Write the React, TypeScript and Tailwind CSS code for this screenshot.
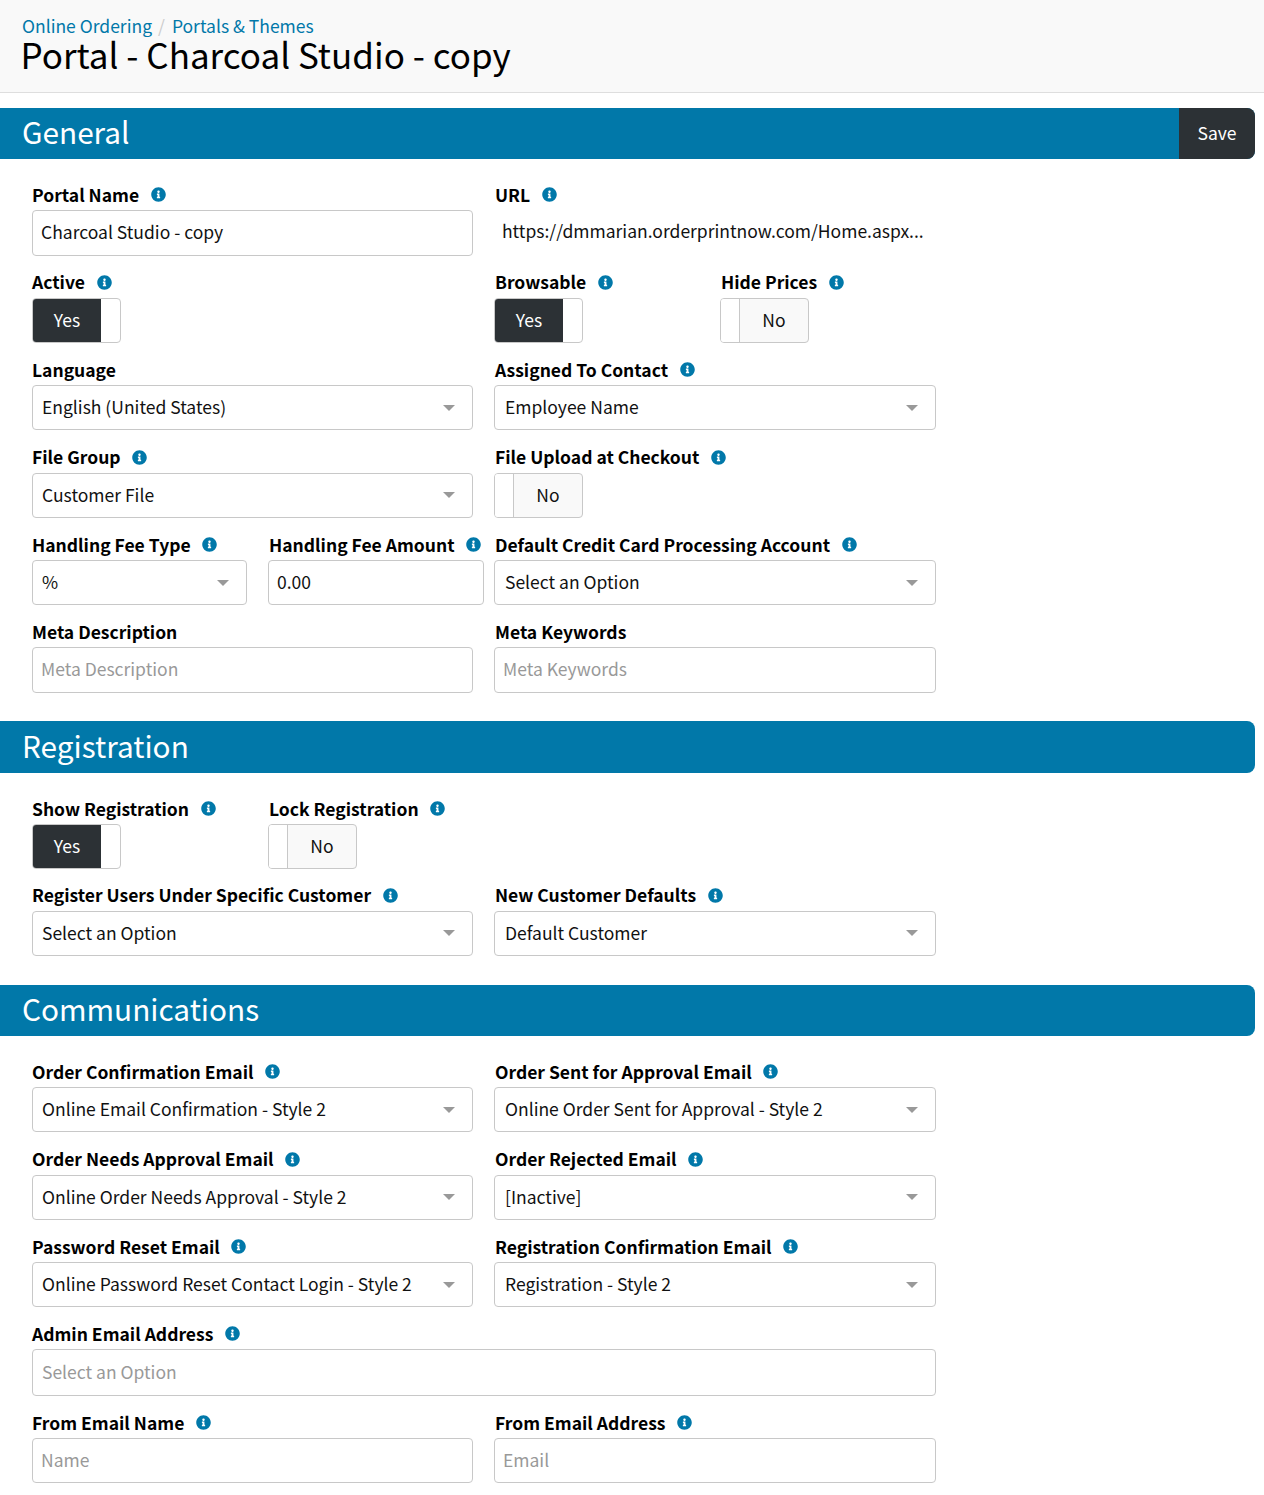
import { FaInfoCircle } from "react-icons/fa";

const FONT = "font-['Noto_Sans_CJK_SC','Noto_Sans',sans-serif]";

function Info() {
  return <FaInfoCircle className="ml-[11.5px] inline-block h-[15px] w-[15px] shrink-0 text-[#0178a9]" />;
}

function Label({ text, info = true, right }: { text: string; info?: boolean; right?: boolean }) {
  return (
    <div
      className={`flex h-[27px] items-center whitespace-nowrap pb-[4px] text-[17.5px] font-bold leading-[24px] text-black ${
        right ? "pl-px" : ""
      }`}
    >
      {text}
      {info ? <Info /> : null}
    </div>
  );
}

function TextInput({
  value,
  placeholder,
  height = "h-[46px]",
  indent = "pl-2"
}: {
  value?: string;
  placeholder?: string;
  height?: string;
  indent?: string;
}) {
  return (
    <div
      className={`flex items-center rounded-[4px] border border-[#c8c8c8] bg-white pb-[2px] pr-2 text-[17.5px] leading-[24px] ${height} ${indent} ${
        value ? "text-[#111]" : "text-[#999]"
      }`}
    >
      {value ?? placeholder}
    </div>
  );
}

function Select({ value, right }: { value: string; right?: boolean }) {
  return (
    <div
      className={`flex h-[45px] items-center justify-between rounded-[4px] border border-[#c8c8c8] bg-white pr-[17px] text-[17.5px] leading-[24px] text-[#111] ${
        right ? "pl-[10px]" : "pl-[9px]"
      }`}
    >
      <span className="pb-[1px]">{value}</span>
      <span className="h-0 w-0 border-x-[6px] border-t-[6px] border-x-transparent border-t-[#999]" />
    </div>
  );
}

function Toggle({ on }: { on: boolean }) {
  if (on) {
    return (
      <div className="flex h-[45px] w-[89px] overflow-hidden rounded-[4px] border border-[#c8c8c8] bg-white text-[17.5px] text-white">
        <div className="flex w-[68px] items-center justify-center bg-[#2c3135]">Yes</div>
      </div>
    );
  }
  return (
    <div className="flex h-[45px] w-[89px] overflow-hidden rounded-[4px] border border-[#c8c8c8] bg-[#f9f9f9] text-[17.5px] text-[#111]">
      <div className="w-[19px] border-r border-[#c8c8c8] bg-white" />
      <div className="flex flex-1 items-center justify-center">No</div>
    </div>
  );
}

function Bar({ title, save, className = "h-[51px]" }: { title: string; save?: boolean; className?: string }) {
  return (
    <div className={`mr-[9px] flex items-center justify-between overflow-hidden rounded-r-[8px] bg-[#0178a9] text-white ${className}`}>
      <h2 className="pb-[3px] pl-[22px] text-[29.75px] leading-none">{title}</h2>
      {save ? (
        <button className="flex h-full w-[76px] items-center justify-center bg-[#2c3135] text-[17.5px]">Save</button>
      ) : null}
    </div>
  );
}

function Row({ children, className = "h-[87.5px]" }: { children: React.ReactNode; className?: string }) {
  return <div className={`grid w-[904px] grid-cols-[441px_442px] gap-x-[21px] ${className}`}>{children}</div>;
}

function Half({ children, right }: { children: React.ReactNode; right?: boolean }) {
  return (
    <div className={`grid gap-x-[21px] ${right ? "grid-cols-[205px_216px]" : "grid-cols-[215px_216px]"}`}>{children}</div>
  );
}

export default function App() {
  return (
    <div className={`min-h-[1495px] bg-white ${FONT}`}>
      <header className="h-[93px] border-b border-[#dedede] bg-[#f9f9f9] pl-[22px] pt-[15px]">
        <nav className="flex h-[22px] items-center text-[17.5px] leading-[22px] text-[#0178a9]">
          <a>Online Ordering</a>
          <span className="ml-[6px] mr-[7px] text-[#ccc]">/</span>
          <a>Portals &amp; Themes</a>
        </nav>
        <h1 className="-ml-[1.5px] text-[35px] leading-[34px] text-black">Portal - Charcoal Studio - copy</h1>
      </header>

      <section className="mt-[15px]">
        <Bar title="General" save />
        <div className="pb-[13.5px] pl-[32px] pt-[24px]">
          <Row>
            <div>
              <Label text="Portal Name" />
              <TextInput value="Charcoal Studio - copy" />
            </div>
            <div>
              <Label text="URL" right />
              <div className="flex h-[42px] items-center pl-2 text-[17.5px] text-[#111]">
                https://dmmarian.orderprintnow.com/Home.aspx...
              </div>
            </div>
          </Row>
          <Row>
            <div>
              <Label text="Active" />
              <Toggle on />
            </div>
            <Half right>
              <div>
                <Label text="Browsable" right />
                <Toggle on />
              </div>
              <div>
                <Label text="Hide Prices" right />
                <Toggle on={false} />
              </div>
            </Half>
          </Row>
          <Row>
            <div>
              <Label text="Language" info={false} />
              <Select value="English (United States)" />
            </div>
            <div>
              <Label text="Assigned To Contact" right />
              <Select value="Employee Name" right />
            </div>
          </Row>
          <Row>
            <div>
              <Label text="File Group" />
              <Select value="Customer File" />
            </div>
            <div>
              <Label text="File Upload at Checkout" right />
              <Toggle on={false} />
            </div>
          </Row>
          <Row className="h-[87px]">
            <Half>
              <div>
                <Label text="Handling Fee Type" />
                <Select value="%" />
              </div>
              <div>
                <Label text="Handling Fee Amount" right />
                <TextInput value="0.00" height="h-[45px]" />
              </div>
            </Half>
            <div>
              <Label text="Default Credit Card Processing Account" right />
              <Select value="Select an Option" right />
            </div>
          </Row>
          <Row>
            <div>
              <Label text="Meta Description" info={false} />
              <TextInput placeholder="Meta Description" />
            </div>
            <div>
              <Label text="Meta Keywords" info={false} right />
              <TextInput placeholder="Meta Keywords" />
            </div>
          </Row>
        </div>
      </section>

      <section>
        <Bar title="Registration" className="h-[52px]" />
        <div className="pb-[15px] pl-[32px] pt-[24px]">
          <Row className="h-[86.5px]">
            <Half>
              <div>
                <Label text="Show Registration" />
                <Toggle on />
              </div>
              <div>
                <Label text="Lock Registration" right />
                <Toggle on={false} />
              </div>
            </Half>
          </Row>
          <Row className="h-[86.5px]">
            <div>
              <Label text="Register Users Under Specific Customer" />
              <Select value="Select an Option" />
            </div>
            <div>
              <Label text="New Customer Defaults" right />
              <Select value="Default Customer" right />
            </div>
          </Row>
        </div>
      </section>

      <section>
        <Bar title="Communications" />
        <div className="pl-[32px] pt-[24px]">
          <Row>
            <div>
              <Label text="Order Confirmation Email" />
              <Select value="Online Email Confirmation - Style 2" />
            </div>
            <div>
              <Label text="Order Sent for Approval Email" right />
              <Select value="Online Order Sent for Approval - Style 2" right />
            </div>
          </Row>
          <Row>
            <div>
              <Label text="Order Needs Approval Email" />
              <Select value="Online Order Needs Approval - Style 2" />
            </div>
            <div>
              <Label text="Order Rejected Email" right />
              <Select value="[Inactive]" right />
            </div>
          </Row>
          <Row className="h-[87px]">
            <div>
              <Label text="Password Reset Email" />
              <Select value="Online Password Reset Contact Login - Style 2" />
            </div>
            <div>
              <Label text="Registration Confirmation Email" right />
              <Select value="Registration - Style 2" right />
            </div>
          </Row>
          <div className="h-[89px] w-[904px]">
            <Label text="Admin Email Address" />
            <TextInput placeholder="Select an Option" height="h-[47px]" indent="pl-[9px]" />
          </div>
          <Row className="h-[84px]">
            <div>
              <Label text="From Email Name" />
              <TextInput placeholder="Name" height="h-[45px]" />
            </div>
            <div>
              <Label text="From Email Address" right />
              <TextInput placeholder="Email" height="h-[45px]" />
            </div>
          </Row>
        </div>
      </section>
    </div>
  );
}
